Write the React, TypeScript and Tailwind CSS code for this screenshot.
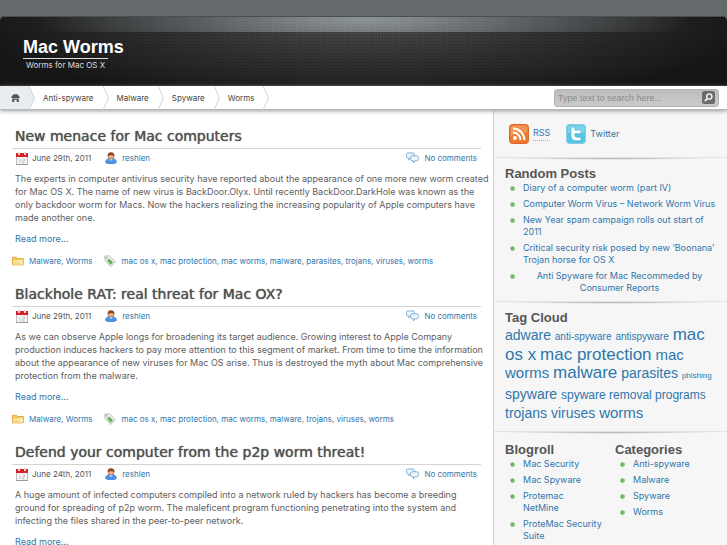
import React from 'react';

type Post = {
	id: number;
	title: string;
	date: string;
	text: string;
	tags: string[];
};

const posts: Post[] = [
	{
		id: 1,
		title: 'New menace for Mac computers',
		date: 'June 29th, 2011',
		text: 'The experts in computer antivirus security have reported about the appearance of one more new worm created for Mac OS X. The name of new virus is BackDoor.Olyx. Until recently BackDoor.DarkHole was known as the only backdoor worm for Macs. Now the hackers realizing the increasing popularity of Apple computers have made another one.',
		tags: ['mac os x', 'mac protection', 'mac worms', 'malware', 'parasites', 'trojans', 'viruses', 'worms']
	},
	{
		id: 2,
		title: 'Blackhole RAT: real threat for Mac OX?',
		date: 'June 29th, 2011',
		text: 'As we can observe Apple longs for broadening its target audience. Growing interest to Apple Company production induces hackers to pay more attention to this segment of market. From time to time the information about the appearance of new viruses for Mac OS arise. Thus is destroyed the myth about Mac comprehensive protection from the malware.',
		tags: ['mac os x', 'mac protection', 'mac worms', 'malware', 'trojans', 'viruses', 'worms']
	},
	{
		id: 3,
		title: 'Defend your computer from the p2p worm threat!',
		date: 'June 24th, 2011',
		text: 'A huge amount of infected computers compiled into a network ruled by hackers has become a breeding ground for spreading of p2p worm. The maleficent program functioning penetrating into the system and infecting the files shared in the peer-to-peer network.',
		tags: []
	}
];

const navItems = ['Anti-spyware', 'Malware', 'Spyware', 'Worms'];

const randomPosts = [
	'Diary of a computer worm (part IV)',
	'Computer Worm Virus – Network Worm Virus',
	'New Year spam campaign rolls out start of 2011',
	'Critical security risk posed by new ‘Boonana’ Trojan horse for OS X',
	'Anti Spyware for Mac Recommeded by Consumer Reports'
];

const tagCloud = [
	{ name: 'adware', size: 'text-[14px]' },
	{ name: 'anti-spyware', size: 'text-[10px]' },
	{ name: 'antispyware', size: 'text-[10px]' },
	{ name: 'mac os x', size: 'text-[17px]' },
	{ name: 'mac protection', size: 'text-[17px]' },
	{ name: 'mac worms', size: 'text-[15px]' },
	{ name: 'malware', size: 'text-[17px]' },
	{ name: 'parasites', size: 'text-[14px]' },
	{ name: 'phishing', size: 'text-[8px]' },
	{ name: 'spyware', size: 'text-[14px]' },
	{ name: 'spyware removal programs', size: 'text-[12px]' },
	{ name: 'trojans', size: 'text-[14px]' },
	{ name: 'viruses', size: 'text-[14px]' },
	{ name: 'worms', size: 'text-[15px]' }
];

const blogroll = ['Mac Security', 'Mac Spyware', 'Protemac\nNetMine', 'ProteMac Security\nSuite'];

const CalendarIcon = () => (
	<svg width="12" height="13" viewBox="0 0 12 13" aria-hidden="true">
		<rect x="0.5" y="1.5" width="11" height="11" fill="#f4f4f4" stroke="#bdbdbd" />
		<rect x="0" y="1" width="12" height="4" fill="#d8202a" />
		<rect x="2" y="0" width="2" height="3" fill="#f3d5d5" />
		<rect x="8" y="0" width="2" height="3" fill="#f3d5d5" />
		<path d="M4 7v4M6.5 7h2v2h-2v2h2" fill="none" stroke="#b5b5b5" strokeWidth="0.7" />
		<path d="M0 12.5h12" stroke="#999" />
	</svg>
);

const UserIcon = () => (
	<svg width="12" height="12" viewBox="0 0 12 12" aria-hidden="true">
		<path d="M0.6 10.4c0-2.8 1.8-4 5.4-4s5.4 1.2 5.4 4c-1.6 1.8-9.2 1.8-10.8 0z" fill="#4b95e8" stroke="#2c69bd" strokeWidth="0.6" />
		<path d="M4 6.8l2 2.2 2-2.2z" fill="#d9ebff" />
		<circle cx="6" cy="4" r="3" fill="#edb48a" stroke="#925127" strokeWidth="0.6" />
		<path d="M2.7 4.2C2.3 1.6 3.8 0.3 6 0.3s3.9 1.3 3.3 3.9C8 3.4 5.4 2.4 2.7 4.2z" fill="#8e4a21" />
	</svg>
);

const CommentsIcon = () => (
	<svg width="13" height="12" viewBox="0 0 14 12" fill="#eff6fc" stroke="#6ea3cc" aria-hidden="true">
		<path d="M2 0.6h5.5Q9 0.6 9 2v2.6Q9 6 7.5 6H4.6L3 8V6H2Q0.6 6 0.6 4.6V2Q0.6 0.6 2 0.6z" strokeWidth="0.9" />
		<path d="M6.4 3.6h5.2q1.6 0 1.6 1.5v2.4q0 1.5-1.6 1.5h-1.8L8 11.4V9H6.4Q5 9 5 7.5V5.1q0-1.5 1.4-1.5z" strokeWidth="0.9" />
	</svg>
);

const FolderIcon = () => (
	<svg width="12" height="10" viewBox="0 0 12 10" aria-hidden="true">
		<path d="M0.5 8.8V1.3h4l1 1.2h5.8v6.3z" fill="#f7d477" stroke="#dfa93f" />
		<path d="M1 4.6c3 1.2 5-1 10-0.4v4.3H1z" fill="#fdeaa9" />
		<path d="M2 3.3h5M1.5 7h6" stroke="#e8b64e" strokeWidth="0.7" />
	</svg>
);

const TagIcon = () => (
	<svg width="12" height="12" viewBox="0 0 12 12" aria-hidden="true">
		<path d="M0.7 1.2L5.4 0.8l6 6-4.6 4.6-5.7-5.8z" fill="#f3f5f2" stroke="#a3aaa2" strokeWidth="0.8" />
		<path d="M5 3.4l4.2 3.8-2.6 2.6-3.6-4z" fill="#62b25a" />
		<circle cx="2.6" cy="2.8" r="0.9" fill="#999" />
	</svg>
);

const HomeIcon = () => (
	<svg width="9" height="8" viewBox="0 0 9 8" fill="#555552" aria-hidden="true">
		<path d="M0 4L1.4 1.2h0.8V0.3h4.6v0.9h0.8L9 4z" />
		<path d="M1.2 4.6h6.6V8H5.7V5.8H3.3V8H1.2z" />
	</svg>
);

const RssIcon = () => (
	<svg width="20" height="20" viewBox="0 0 20 20" fill="none" aria-hidden="true">
		<rect x="0.5" y="0.5" width="19" height="19" rx="3" fill="#ee7a30" stroke="#d9642a" />
		<path d="M1.5 4Q1.5 1.5 4 1.5h12q2.5 0 2.5 2.5v4Q10 8 1.5 12z" fill="#f49350" />
		<circle cx="6" cy="14" r="2" fill="#fff" />
		<path d="M4 8.6A7.4 7.4 0 0 1 11.4 16M4 4.6A11.4 11.4 0 0 1 15.4 16" stroke="#fff" strokeWidth="2" />
	</svg>
);

const TwitterIcon = () => (
	<svg width="20" height="20" viewBox="0 0 20 20" fill="none" aria-hidden="true">
		<rect x="0.5" y="0.5" width="19" height="19" rx="3" fill="#55c4e6" stroke="#8ccbe0" />
		<path d="M1.5 4Q1.5 1.5 4 1.5h12q2.5 0 2.5 2.5v5h-17z" fill="#7bd3ee" />
		<path
			d="M5 4.5q0-1.7 1.9-1.7t1.9 1.7v1.6h4.7q1.7 0 1.7 1.8t-1.7 1.8H8.8v1.2q0 2.3 2.2 2.3h2.5q1.7 0 1.7 1.8t-1.7 1.8H10.5Q5 16.8 5 11.5z"
			fill="#fff"
			stroke="#3eaad0"
			strokeWidth="0.6"
		/>
	</svg>
);

const SearchIcon = () => (
	<svg width="13" height="13" viewBox="0 0 13 13" fill="none" aria-hidden="true">
		<rect width="13" height="13" rx="2.5" fill="#6b6b6b" />
		<circle cx="7.3" cy="5.6" r="2.6" stroke="#eee" strokeWidth="1.5" />
		<path d="M5.3 7.7L2.8 10.2" stroke="#eee" strokeWidth="1.8" />
	</svg>
);

const Chevron = ({ filled = false }: { filled?: boolean }) => (
	<svg width="6" height="24" viewBox="0 0 6 24" fill={filled ? '#e9edf0' : 'none'} aria-hidden="true">
		<path d="M0 0L5.5 12L0 24" stroke="#d2d4d5" />
	</svg>
);

const Divider = () => (
	<div className="h-[3px] border-t border-[#e4e4e4] bg-[radial-gradient(ellipse_at_top,#a4a4a4,transparent_65%)]"></div>
);

const BulletList = ({ items, centerLast = false }: { items: string[]; centerLast?: boolean }) => (
	<ul className="flex flex-col gap-1 pl-[5px]">
		{items.map((item, index) => (
			<li key={item} className="flex gap-2 leading-3">
				<span className="mt-1 size-[5px] shrink-0 rounded-full border border-[#8cc884] bg-[#6cb763]"></span>
				<a
					href="#"
					className={
						centerLast && index === items.length - 1
							? 'flex-1 text-center text-[#2f76ab]'
							: 'flex-1 whitespace-pre-line text-[#2f76ab]'
					}
				>
					{item}
				</a>
			</li>
		))}
	</ul>
);

const LinkList = ({ items }: { items: string[] }) => (
	<span className="text-[#666]">
		{items.map((item, index) => (
			<React.Fragment key={item}>
				{index > 0 && ', '}
				<a href="#" className="text-[#2f76ab]">{item}</a>
			</React.Fragment>
		))}
	</span>
);

const Header = () => (
	<header className="flex h-[70px] flex-col overflow-hidden rounded-t-[5px] bg-[radial-gradient(circle,#00000040_1px,transparent_1px),radial-gradient(ellipse_55%_130%_at_50%_0%,#505050,#303030_50%,#161616)] bg-[size:3px_3px,100%_100%]">
		<div className="h-4 border-t border-[#4b4e50] bg-[radial-gradient(circle,#0000001a_1px,transparent_1px),radial-gradient(ellipse_45%_400%_at_50%_0%,#90979a,#6b7275b3_50%,transparent)] bg-[size:3px_3px,100%_100%]"></div>
		<div className="px-[23px] pt-1">
			<h1 className="font-['Liberation_Sans',sans-serif] text-[18px] leading-[22px] font-bold text-white">
				<a href="#">Mac Worms</a>
			</h1>
			<p className="inline-block border-t border-[#ddd] px-[3px] text-[8px] leading-3 text-[#ddd]">Worms for Mac OS X</p>
		</div>
	</header>
);

const NavBar = () => (
	<nav className="relative flex h-6 items-center justify-between border-b border-[#b8b8b8] bg-white pr-2 shadow-[0_1px_4px_#999]">
		<div className="flex h-full items-center text-[8px] text-[#4b443c]">
			<a href="#" aria-label="Home" className="flex h-full w-[29px] items-center bg-[#e9edf0] pl-[11px]">
				<HomeIcon />
			</a>
			<Chevron filled />
			{navItems.map((item) => (
				<React.Fragment key={item}>
					<a href="#" className="pr-[9px] pl-2">{item}</a>
					<Chevron />
				</React.Fragment>
			))}
		</div>
		<form className="flex h-[18px] w-[165px] items-center rounded-[3px] border border-[#b3b3b3] bg-linear-to-b from-[#bdbdbd] to-[#cacaca] px-[3px]">
			<input
				type="text"
				aria-label="Search"
				placeholder="Type text to search here..."
				className="min-w-0 flex-1 bg-transparent pt-0.5 font-['Liberation_Sans',sans-serif] text-[9px] text-[#555] outline-none placeholder:text-[#8b8b8b]"
			/>
			<button type="submit" aria-label="Search">
				<SearchIcon />
			</button>
		</form>
	</nav>
);

const PostCard = ({ post }: { post: Post }) => (
	<article className="pb-[15px]">
		<h2 className="border-b border-[#d4d4d4] pl-[3px] font-['DejaVu_Sans',sans-serif] text-[14px] leading-6 whitespace-nowrap text-[#505050] [text-shadow:0_0_1px_#505050]">
			<a href="#">{post.title}</a>
		</h2>
		<div className="flex h-[18px] items-center pr-1 pl-1 text-[8px] text-[#555]">
			<CalendarIcon />
			<span className="pl-1">{post.date}</span>
			<span className="flex items-center gap-[5px] pl-3.5">
				<UserIcon />
				<a href="#" className="text-[#2f76ab]">reshlen</a>
			</span>
			<span className="ml-auto flex items-center gap-[5px]">
				<CommentsIcon />
				<a href="#" className="text-[#2f76ab]">No comments</a>
			</span>
		</div>
		<div className="-mr-2 pt-[5px] pl-[3px] leading-[13px]">
			<p>{post.text}</p>
			<a href="#" className="mt-2 block text-[#2f76ab]">Read more…</a>
		</div>
		{post.tags.length > 0 && (
			<div className="mt-[9px] flex h-[13px] items-center text-[8px]">
				<FolderIcon />
				<span className="pl-[5px]">
					<LinkList items={['Malware', 'Worms']} />
				</span>
				<span className="flex items-center gap-[5px] pl-3">
					<TagIcon />
					<LinkList items={post.tags} />
				</span>
			</div>
		)}
	</article>
);

const heading = "font-['Liberation_Sans',sans-serif] text-[13px] leading-4 font-bold text-[#555]";

const Sidebar = () => (
	<aside className="w-[234px] shrink-0 border-l border-[#d4d4d4] bg-[#f6f6f6]">
		<div className="flex h-[47px] items-center gap-4 pl-[15px]">
			<a href="#" className="flex items-center gap-1 text-[#2f76ab]">
				<RssIcon />
				<span className="border-b border-dotted border-[#8fb5d2]">RSS</span>
			</a>
			<a href="#" className="flex items-center gap-1 text-[#2f76ab]">
				<TwitterIcon />
				Twitter
			</a>
		</div>
		<Divider />
		<section className="px-[11px] pt-1.5 pb-[7px]">
			<h3 className={heading}>Random Posts</h3>
			<BulletList items={randomPosts} centerLast />
		</section>
		<Divider />
		<section className="px-[11px] pt-1.5 pb-[9px] font-['Liberation_Sans',sans-serif]">
			<h3 className={heading}>Tag Cloud</h3>
			<p className="text-[14px] leading-[18px] text-[#2f76ab]">
				{tagCloud.map((tag) => (
					<React.Fragment key={tag.name}>
						<a href="#" className={tag.size}>{tag.name}</a>{' '}
					</React.Fragment>
				))}
			</p>
		</section>
		<Divider />
		<div className="flex px-[11px] pt-2">
			<section className="w-[110px]">
				<h3 className={heading}>Blogroll</h3>
				<BulletList items={blogroll} />
			</section>
			<section className="flex-1">
				<h3 className={heading}>Categories</h3>
				<BulletList items={navItems} />
			</section>
		</div>
	</aside>
);

export default function App() {
	return (
		<div className="min-h-screen bg-[#64696c] pt-4 font-['Inter',sans-serif] text-[9px] text-[#606060]">
			<Header />
			<NavBar />
			<div className="flex bg-white">
				<main className="min-w-0 flex-1 pt-[14px] pr-3 pl-3">
					{posts.map((post) => (
						<PostCard key={post.id} post={post} />
					))}
				</main>
				<Sidebar />
			</div>
		</div>
	);
}
